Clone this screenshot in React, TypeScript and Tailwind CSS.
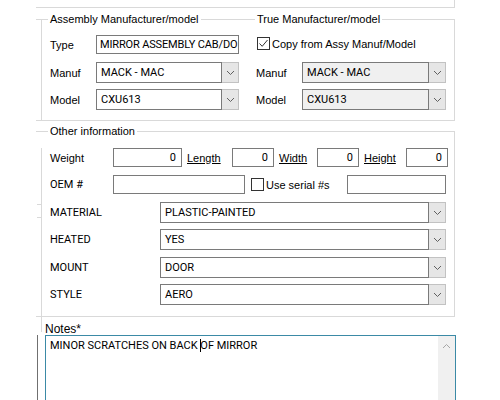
import React from "react";

const U = "font-['Roboto','Liberation_Sans',sans-serif] text-[11px]";

function Chevron({ up = false, color = "#606060" }: { up?: boolean; color?: string }) {
  return (
    <svg width="9" height="6" viewBox="0 0 9 6">
      <path d={up ? "M1 5 L4.5 1.5 L8 5" : "M1 1 L4.5 4.5 L8 1"} fill="none" stroke={color} strokeWidth="1" />
    </svg>
  );
}

function Combo({ value, w, disabled = false }: { value: string; w: string; disabled?: boolean }) {
  return (
    <div className={`flex h-[21px] ${w}`}>
      <div
        className={`flex-1 min-w-0 border border-[#7a7a7a] ${disabled ? "bg-[#f0f0f0]" : "bg-white"} pl-[4px] flex items-center overflow-hidden whitespace-nowrap ${U}`}
      >
        {value}
      </div>
      <div className="w-[17px] shrink-0 border-y border-r border-[#c2c2c2] bg-[#e6e6e6] flex items-center justify-center">
        <Chevron />
      </div>
    </div>
  );
}

function TextBox({ value = "", w, right = false, extra = "pl-[4px]" }: { value?: string; w: string; right?: boolean; extra?: string }) {
  return (
    <div
      className={`h-[19px] ${w} border border-[#7a7a7a] bg-white flex items-center overflow-hidden whitespace-nowrap ${U} ${right ? "justify-end pr-[5px]" : extra}`}
    >
      {value}
    </div>
  );
}

function Check({ checked = false }: { checked?: boolean }) {
  return (
    <div className="w-[13px] h-[13px] shrink-0 border border-[#333333] bg-white flex items-center justify-center">
      {checked && (
        <svg width="11" height="11" viewBox="0 0 11 11">
          <path d="M1.5 5.5 L4.2 8.3 L9.5 2" fill="none" stroke="#333333" strokeWidth="1" />
        </svg>
      )}
    </div>
  );
}

export default function App() {
  return (
    <div className="w-[500px] h-[400px] bg-white overflow-hidden font-['Liberation_Sans',Arial,sans-serif] text-[11px] leading-[14px] text-black">
      <div className="ml-[36px] w-[419px] h-[8px] border-b border-r border-[#d9d9d9]" />

      {/* Top group boxes */}
      <div className="relative ml-[36px] mt-[11px] w-[419px] h-[102px] border-t border-b border-r border-[#d9d9d9] flex">
        <span className="absolute left-[12px] top-[-8px] bg-white px-[2px]">Assembly Manufacturer/model</span>
        <span className="absolute left-[219px] top-[-8px] bg-white px-[2px]">True Manufacturer/model</span>

        <div className="ml-[5px] w-[209px] h-full border-l border-[#d9d9d9] pl-[8px]">
          <div className="flex items-center mt-[15px] h-[19px]">
            <span className="w-[46px]">Type</span>
            <TextBox w="w-[143px]" value="MIRROR ASSEMBLY CAB/DO" extra="pl-[3px] tracking-[-0.15px]" />
          </div>
          <div className="flex items-center mt-[8px] h-[21px]">
            <span className="w-[46px]">Manuf</span>
            <Combo w="w-[143px]" value="MACK - MAC" />
          </div>
          <div className="flex items-center mt-[6px] h-[21px]">
            <span className="w-[46px]">Model</span>
            <Combo w="w-[143px]" value="CXU613" />
          </div>
        </div>

        <div className="flex-1 pl-[6px]">
          <div className="flex items-center mt-[17px] h-[13px] ml-[1px]">
            <Check checked />
            <span className="ml-[2px]">Copy from Assy Manuf/Model</span>
          </div>
          <div className="flex items-center mt-[12px] h-[21px]">
            <span className="w-[46px]">Manuf</span>
            <Combo w="w-[144px]" value="MACK - MAC" disabled />
          </div>
          <div className="flex items-center mt-[6px] h-[21px]">
            <span className="w-[46px]">Model</span>
            <Combo w="w-[144px]" value="CXU613" disabled />
          </div>
        </div>
      </div>

      {/* Other information */}
      <div className="relative ml-[36px] mt-[10px] w-[419px] h-[186px] border-t border-b border-r border-[#d9d9d9]">
        <span className="absolute left-[12px] top-[-8px] bg-white px-[2px]">Other information</span>
        <span className="absolute left-[1px] top-[72px] w-[4px] h-px bg-[#d9d9d9]" />
        <span className="absolute left-[1px] top-[85px] w-[4px] h-px bg-[#d9d9d9]" />

        <div className="ml-[5px] h-full border-l border-[#d9d9d9] pl-[8px]">
          <div className="flex items-center mt-[16px] h-[19px]">
            <span className="w-[63px]">Weight</span>
            <TextBox w="w-[69px]" value="0" right />
            <span className="ml-[5px] w-[45px] underline">Length</span>
            <TextBox w="w-[42px]" value="0" right />
            <span className="ml-[5px] w-[38px] underline">Width</span>
            <TextBox w="w-[42px]" value="0" right />
            <span className="ml-[5px] w-[42px] underline">Height</span>
            <TextBox w="w-[42px]" value="0" right />
          </div>
          <div className="flex items-center mt-[8px] h-[19px]">
            <span className={`w-[63px] ${U}`}>OEM #</span>
            <TextBox w="w-[132px]" />
            <div className="ml-[6px]">
              <Check />
            </div>
            <span className="ml-[2px] w-[81px]">Use serial #s</span>
            <TextBox w="w-[99px]" />
          </div>
          <div className="flex items-center mt-[8px] h-[21px]">
            <span className={`w-[110px] ${U}`}>MATERIAL</span>
            <Combo w="w-[286px]" value="PLASTIC-PAINTED" />
          </div>
          <div className="flex items-center mt-[6px] h-[21px]">
            <span className={`w-[110px] ${U}`}>HEATED</span>
            <Combo w="w-[286px]" value="YES" />
          </div>
          <div className="flex items-center mt-[7px] h-[21px]">
            <span className={`w-[110px] ${U}`}>MOUNT</span>
            <Combo w="w-[286px]" value="DOOR" />
          </div>
          <div className="flex items-center mt-[6px] h-[21px]">
            <span className={`w-[110px] ${U}`}>STYLE</span>
            <Combo w="w-[286px]" value="AERO" />
          </div>
        </div>
      </div>

      {/* Notes */}
      <div className="ml-[45px] h-[18px] pt-[5px] text-[12px]">Notes*</div>
      <div className="flex ml-[37px] h-[70px]">
        <div className="w-px h-full bg-[#707070]" />
        <div className="ml-[7px] w-[411px] h-full border border-[#3b8aa6] flex">
          <div className={`flex-1 pl-[4px] pt-[3px] whitespace-nowrap ${U}`}>
            MINOR SCRATCHES ON BACK{" "}
            <span className="inline-block w-px h-[13px] bg-black -mr-px align-[-3px]" />
            OF MIRROR
          </div>
          <div className="w-[17px] h-full bg-[#f0f0f0] flex justify-center pt-[7px]">
            <Chevron up color="#a6a6a6" />
          </div>
        </div>
      </div>
    </div>
  );
}
